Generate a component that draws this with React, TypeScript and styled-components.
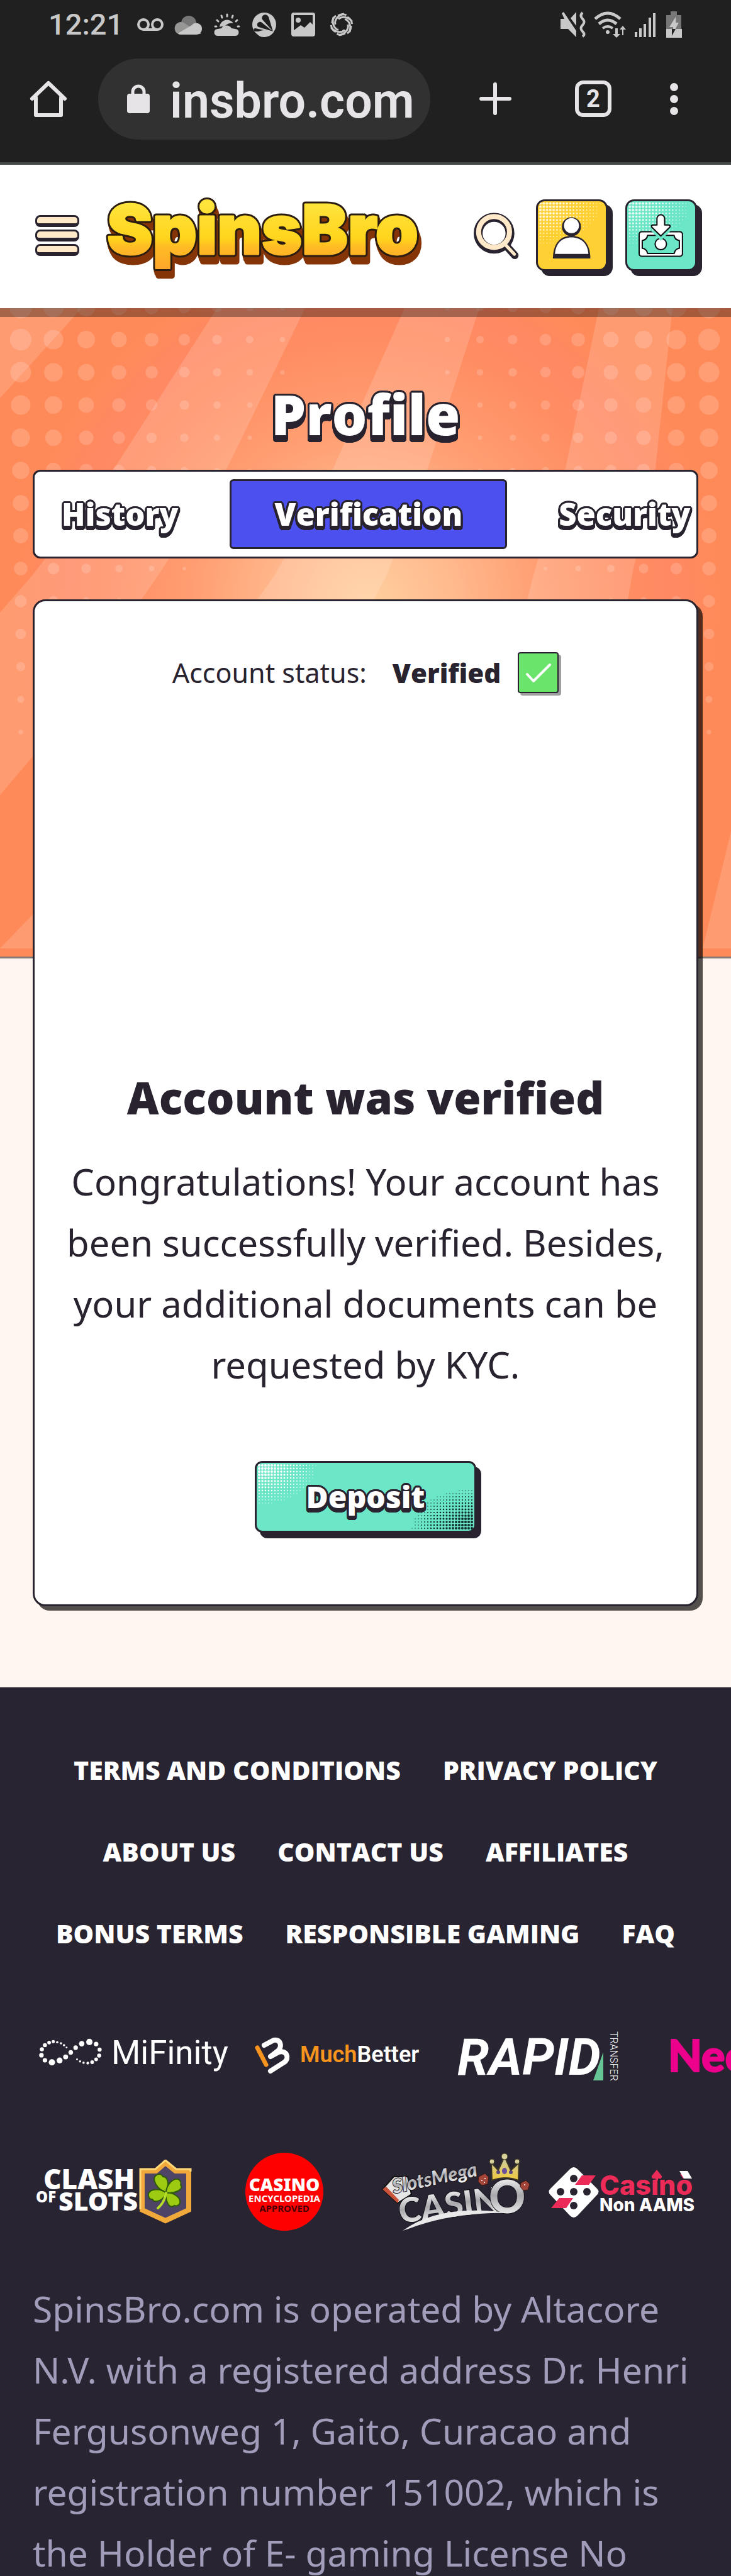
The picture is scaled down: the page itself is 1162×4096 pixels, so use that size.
import React from 'react';
import styled, { createGlobalStyle, css } from 'styled-components';

const INK = '#28232f';
const SANS = '"Noto Sans", "Open Sans", sans-serif';
const HEAVY = '"Open Sans", "Noto Sans", sans-serif';
const UI = 'Roboto, "Liberation Sans", sans-serif';

/* Comic outline: a ring of hard shadows plus an extruded lower edge. */
const outline = (ring: number, drop: number) => {
  const parts: string[] = [];
  for (let d = 0; d <= drop; d += 2) {
    for (let a = 0; a < 16; a += 1) {
      const x = Math.round(Math.cos((a * Math.PI) / 8) * ring);
      const y = Math.round(Math.sin((a * Math.PI) / 8) * ring) + d;
      parts.push(`${x}px ${y}px 0 ${INK}`);
    }
  }
  return parts.join(',');
};

const GlobalStyle = createGlobalStyle`
  *, *::before, *::after { box-sizing: border-box; }
  body { margin: 0; font-family: ${SANS}; color: ${INK}; }
  button, input { font: inherit; color: inherit; margin: 0; }
  h1, h2, p { margin: 0; }
  svg { display: block; flex: none; overflow: visible; }
`;

const Screen = styled.div`
  height: 100vh;
  overflow: hidden;
  display: flex;
  flex-direction: column;
  background: #fff6ef;
  > * { flex: none; }
`;

/* ---------- phone and browser chrome ---------- */

const Chrome = styled.div`
  background: #202020;
  border-bottom: 4px solid #434947;
  font-family: ${UI};
`;

const StatusBar = styled.div`
  height: 78px;
  display: flex;
  align-items: center;
  justify-content: space-between;
  padding: 0 75px 0 77px;
  color: #c8c8c8;
`;

const StatusGroup = styled.div<{ gap: number }>`
  display: flex;
  align-items: center;
  gap: ${(p) => p.gap}px;
`;

const Clock = styled.time`
  font-size: 47px;
  font-weight: 500;
  line-height: 52px;
`;

const Toolbar = styled.div`
  height: 180px;
  display: flex;
  align-items: center;
  padding: 0 84px 22px 48px;
  color: #e6e4e6;
`;

const BareButton = styled.button`
  border: 0;
  padding: 0;
  background: none;
  display: block;
  flex: none;
`;

const AddressPill = styled.label`
  flex: 1 1 0;
  min-width: 0;
  height: 129px;
  margin: 0 78px 0 50px;
  padding: 0 12px 0 46px;
  border-radius: 65px;
  background: #313131;
  display: flex;
  align-items: center;
  gap: 32px;
`;

const Address = styled.input`
  flex: 1 1 0;
  min-width: 0;
  width: 0;
  height: 112px;
  border: 0;
  padding: 8px 0 0;
  background: none;
  outline: 0;
  font-size: 77px;
  font-weight: 600;
  line-height: 100px;
`;

const TabsButton = styled(BareButton)`
  width: 58px;
  height: 58px;
  margin-left: 101px;
  border: 6px solid #e6e4e6;
  border-radius: 13px;
  font-size: 38px;
  font-weight: 700;
  line-height: 46px;
  text-align: center;
`;

const MenuDots = styled(BareButton)`
  margin-left: 93px;
  display: grid;
  gap: 6px;
`;

const Dot = styled.span`
  width: 13px;
  height: 13px;
  border-radius: 50%;
  background: #e6e4e6;
`;

/* ---------- site header ---------- */

const Header = styled.header`
  position: relative;
  z-index: 1;
  height: 228px;
  padding: 0 54px 4px 56px;
  display: flex;
  align-items: center;
  background: #fff;
  box-shadow: 0 14px 0 rgba(0, 0, 0, 0.35);
`;

const Burger = styled(BareButton)`
  display: grid;
  gap: 4px;
`;

const BurgerBar = styled.span`
  width: 70px;
  height: 19px;
  border: 3px solid ${INK};
  border-bottom-width: 6px;
  border-radius: 8px;
  background: #ffe9c9;
`;

const LogoLink = styled.a`
  display: block;
  margin: 0 auto 0 43px;
`;

const HeaderActions = styled.div`
  display: flex;
  align-items: center;
  gap: 28px;
`;

const TileButton = styled.button<{ tone: string }>`
  width: 114px;
  height: 114px;
  padding: 0;
  border: 3px solid ${INK};
  border-radius: 14px;
  overflow: hidden;
  background: ${(p) => p.tone};
  box-shadow: 8px 8px 0 ${INK};
`;

/* ---------- profile page ---------- */

const Main = styled.main`
  display: grid;
`;

const Backdrop = styled.div`
  grid-area: 1 / 1;
  align-self: start;
  height: 1034px;
  border-bottom: 3px solid #85786e;
  background: #ff8a59;
  overflow: hidden;
  svg { width: 100%; height: 1018px; overflow: hidden; }
`;

const Content = styled.div`
  grid-area: 1 / 1;
  min-width: 0;
  padding: 120px 52px 129px;
`;

const Title = styled.h1`
  font-family: ${HEAVY};
  font-size: 88px;
  font-weight: 800;
  line-height: 97px;
  text-align: center;
  color: #fff;
  text-shadow: ${outline(3, 8)};
`;

const TabStrip = styled.div`
  height: 141px;
  margin-top: 40px;
  padding: 12px 0;
  border: 3px solid ${INK};
  border-radius: 12px;
  background: #fff;
  overflow: hidden;
  display: flex;
  gap: 11px;
`;

const Tab = styled.button<{ active?: boolean; scrolled?: boolean }>`
  flex: none;
  padding: 0 68px 2px;
  border: 3px solid transparent;
  border-radius: 6px;
  background: none;
  font-family: ${HEAVY};
  font-size: 49px;
  font-weight: 800;
  line-height: 60px;
  color: #fff;
  text-shadow: ${outline(3, 4)};
  ${(p) => p.active && css`background: #4b50ef; border-color: ${INK};`}
  ${(p) => p.scrolled && css`margin-left: -28px;`}
`;

const Card = styled.section`
  margin-top: 65px;
  padding: 81px 44px 114px;
  border: 3px solid ${INK};
  border-radius: 20px;
  background: #fff;
  box-shadow: 7px 7px 0 rgba(0, 0, 0, 0.68);
  display: flex;
  flex-direction: column;
  align-items: center;
`;

const StatusRow = styled.div`
  display: flex;
  align-items: center;
  font-size: 43px;
  line-height: 65px;
`;

const StatusValue = styled.strong`
  margin: 0 27px 0 41px;
  font-family: ${HEAVY};
  font-size: 42px;
  font-weight: 800;
`;

const CheckBadge = styled.span`
  width: 65px;
  height: 65px;
  border: 2px solid ${INK};
  border-radius: 4px;
  background: #6be46b;
  box-shadow: 4px 4px 0 rgba(0, 0, 0, 0.38);
  display: grid;
  place-items: center;
`;

const Illustration = styled.div`
  height: 595px;
`;

const CardTitle = styled.h2`
  font-family: ${HEAVY};
  font-size: 70px;
  font-weight: 800;
  line-height: 97px;
`;

const CardText = styled.p`
  margin-top: 36px;
  font-size: 58px;
  line-height: 97px;
  text-align: center;
`;

const DepositButton = styled.button`
  position: relative;
  width: 352px;
  height: 114px;
  margin-top: 105px;
  padding: 0;
  border: 3px solid ${INK};
  border-radius: 12px;
  background: #6be6c6;
  box-shadow: 8px 9px 0 ${INK};
  font-family: ${HEAVY};
  font-size: 48px;
  font-weight: 800;
  line-height: 60px;
  color: #fff;
  text-shadow: ${outline(3, 4)};
  > svg { position: absolute; inset: 0; width: 100%; height: 100%; }
  > span { position: relative; }
`;

/* ---------- footer ---------- */

const Footer = styled.footer`
  padding-top: 99px;
  background: #292431;
  color: #fff;
`;

const FooterNav = styled.nav`
  padding: 0 52px;
  display: flex;
  flex-wrap: wrap;
  justify-content: center;
  gap: 65px 67px;
`;

const FooterLink = styled.a`
  font-family: ${HEAVY};
  font-size: 41px;
  font-weight: 800;
  line-height: 65px;
  color: #fff;
  text-decoration: none;
  white-space: nowrap;
`;

const LogoRow = styled.div<{ top: number }>`
  margin-top: ${(p) => p.top}px;
  padding-left: 53px;
  display: flex;
  overflow: hidden;
`;

const Legal = styled.p`
  margin-top: 76px;
  padding: 0 52px;
  font-size: 57px;
  line-height: 97px;
  color: #a09cba;
`;

/* ---------- drawings ---------- */

type DotProps = { cols: number; rows: number; pitch: number; max: number; x: number; y: number; dir: 1 | -1; fill: string };

const HalftoneDots = ({ cols, rows, pitch, max, x, y, dir, fill }: DotProps) => (
  <g fill={fill}>
    {Array.from({ length: cols * rows }, (_, i) => {
      const c = i % cols;
      const r = Math.floor(i / cols);
      const t = 1 - Math.hypot(c / cols, r / rows);
      return t > 0.05 ? (
        <circle key={i} cx={x + dir * c * pitch} cy={y + dir * r * pitch} r={max * Math.min(1, 0.25 + t)} />
      ) : null;
    })}
  </g>
);

const StatusIconsLeft = () => (
  <svg width="348" height="44" viewBox="0 0 348 44" fill="none">
    <g stroke="#c8c8c8" strokeWidth="4">
      <circle cx="10" cy="22" r="8" /><circle cx="32" cy="22" r="8" /><path d="M10 30H32" />
    </g>
    <circle cx="82" cy="20" r="12" fill="#777" />
    <path d="M70 38a10 10 0 1 1 4-19l28 18z" fill="#969794" />
    <path d="M65 36l22-13a9 9 0 0 1 16 6c0 5-4 9-9 9H71c-3 0-5-1-6-2z" fill="#c8c8c8" />
    <g fill="#c8c8c8" transform="translate(-4 0)">
      <path d="M135 26a12 12 0 0 1 22-6c-9-2-13 5-16 5-3 0-4 0-6 1z" />
      <path d="M132 40a5 5 0 0 1 0-11l6-1c3-6 13-6 16 0l6 1a5 5 0 0 1 0 11z" />
      <path d="M147 6v3M138 8l1 3M131 15l2 2M128 25h2M156 8l-1 3M163 15l-2 2M166 25h-2" stroke="#c8c8c8" strokeWidth="3" strokeLinecap="round" />
    </g>
    <circle cx="202" cy="22" r="19" fill="#c8c8c8" />
    <g fill="#202020" transform="translate(-6 0)">
      <path d="M222 33l-17-19c-3-5 5-12 10-4z" />
      <path d="M222 33l-23-7c-5-3-1-10 4-8z" />
      <path d="M222 34l-28-1c-3 0-4-5 0-5z" />
    </g>
    <path d="M190 35c8-6 18-4 27-1-4 6-10 8-16 8s-9-3-11-7z" fill="#c8c8c8" />
    <g transform="translate(-6 0)">
      <rect x="253" y="5" width="34" height="34" rx="2" stroke="#c8c8c8" strokeWidth="4" />
      <circle cx="262" cy="15" r="4" fill="#c8c8c8" />
      <path d="M254 32l12-9 6 4 9-9 7 7v13h-34z" fill="#c8c8c8" />
    </g>
    <g stroke="#c8c8c8" transform="translate(325 22)">
      {[0, 60, 120, 180, 240, 300].map((a) => (
        <path key={a} transform={`rotate(${a})`} d="M-10 0C-12 -8 -5 -15 4 -17M-15 -2C-15 -8 -12 -12 -9 -14" strokeWidth="3" />
      ))}
    </g>
  </svg>
);

const StatusIconsRight = () => (
  <svg width="196" height="42" viewBox="0 0 196 42" fill="#c8c8c8">
    <path d="M0 12h6L2 3l3-2 20 30v10L12 28H0zM16 11l9-10v22z" />
    <path d="M35 2q-5 5 0 10t0 10 0 10 0 8" fill="none" stroke="#c8c8c8" strokeWidth="4" />
    <g fill="none" stroke="#c8c8c8" strokeWidth="5">
      <path d="M55 12q20-18 40 0" /><path d="M61 20q14-12 28 0" /><path d="M67 27q8-6 16 0" strokeWidth="4" />
    </g>
    <circle cx="75" cy="33" r="3" />
    <path d="M87 27v9h-4l6 6 6-6h-4v-9zM98 38v-9h-4l5-6 5 6h-4v9z" />
    <path d="M118 33h4v8h-4zM125 27h4v14h-4zM132 20h4v21h-4zM140 10h4v31h-4zM147 3h4v38h-4z" />
    <path d="M175 0h10v6h7v22h-24V6h7z" fill="#777" />
    <rect x="168" y="28" width="25" height="14" />
    <path d="M183 9l-10 16h6v4h3l6-11h-5z" />
    <path d="M177 28h6l-6 11z" fill="#202020" />
  </svg>
);

const HomeIcon = () => (
  <svg width="58" height="58" viewBox="0 0 58 58" fill="none" stroke="#e6e4e6" strokeWidth="6" strokeLinejoin="round" strokeLinecap="round">
    <path d="M3 29L29 4l26 25M9 27v28h40V27" />
  </svg>
);

const LockIcon = () => (
  <svg width="36" height="46" viewBox="0 0 36 46">
    <rect y="15" width="36" height="31" rx="4" fill="#e6e4e6" />
    <path d="M9 16v-4a9 9 0 0 1 18 0v4" fill="none" stroke="#e6e4e6" strokeWidth="5" />
  </svg>
);

const PlusIcon = () => (
  <svg width="51" height="52" viewBox="0 0 51 52" stroke="#e6e4e6" strokeWidth="6" strokeLinecap="round">
    <path d="M25 3v46M3 26h45" />
  </svg>
);

const SpinsBroLogo = () => (
  <svg width="502" height="112" viewBox="0 0 502 112" role="img" aria-label="SpinsBro">
    <defs>
      <linearGradient id="gold" x1="0" y1="0" x2="0" y2="1">
        <stop offset="0.2" stopColor="#ffe43c" />
        <stop offset="0.62" stopColor="#ffd41c" />
        <stop offset="0.72" stopColor="#ffbb24" />
        <stop offset="1" stopColor="#ffa52c" />
      </linearGradient>
      <text id="wordmark" x="1" y="86" fontFamily="Inter, sans-serif" fontWeight="900" fontSize="109">SpinsBro</text>
    </defs>
    <g fill="#843406" stroke="#843406" strokeWidth="9" strokeLinejoin="round">
      <use href="#wordmark" x="1" y="4" /><use href="#wordmark" x="2" y="8" /><use href="#wordmark" x="4" y="12" />
    </g>
    <use href="#wordmark" stroke="#2a1c10" strokeWidth="9" strokeLinejoin="round" fill="#2a1c10" />
    <use href="#wordmark" fill="url(#gold)" stroke="url(#gold)" strokeWidth="3" strokeLinejoin="round" />
  </svg>
);

const SearchIcon = () => (
  <svg width="71" height="75" viewBox="0 0 237 250" fill="none">
    <g stroke={INK} strokeWidth="58" strokeLinecap="round">
      <circle cx="108" cy="113" r="79" /><path d="M182 190l36 40" strokeWidth="40" />
    </g>
    <g stroke="#ffe9c9" strokeLinecap="round">
      <circle cx="108" cy="106" r="82" strokeWidth="27" /><path d="M172 178l44 46" strokeWidth="17" />
    </g>
    <circle cx="108" cy="113" r="61" fill="#fff" />
  </svg>
);

const UserIcon = () => (
  <svg width="108" height="108" viewBox="10 10 370 370">
    <HalftoneDots cols={19} rows={13} pitch={18} max={7} x={24} y={22} dir={1} fill="#fff6cf" />
    <circle cx="193" cy="149" r="52" fill={INK} />
    <path d="M92 322c0-86 44-124 101-124s103 38 103 124z" fill={INK} />
    <circle cx="193" cy="143" r="41" fill="#fff" />
    <path d="M103 297c4-60 40-90 90-90s88 30 92 90z" fill="#fff" />
  </svg>
);

const CashIcon = () => (
  <svg width="108" height="108" viewBox="10 10 370 370">
    <HalftoneDots cols={19} rows={13} pitch={18} max={7} x={24} y={22} dir={1} fill="#dffaf2" />
    <g stroke="#0c0c10" strokeWidth="7" strokeLinejoin="round">
      <rect x="75" y="176" width="236" height="134" rx="14" fill="#fff" />
      <path d="M121 196H265q4 24 29 28v42q-24 4-28 28H121q-4-24-29-28v-42q25-4 29-28z" fill="#6be6c6" />
      <circle cx="193" cy="243" r="31" fill="#fff" />
      <path d="M140 172l53 52 53-52z" fill="#6be6c6" stroke="none" />
      <path d="M172 105a21 21 0 0 1 42 0v34h22q12 2 6 12l-49 48-49-48q-6-10 6-12h22z" fill="#fff" />
    </g>
  </svg>
);

const DepositHalftone = () => (
  <svg viewBox="0 0 346 108" preserveAspectRatio="none" aria-hidden="true">
    <HalftoneDots cols={19} rows={13} pitch={5} max={2} x={4} y={4} dir={1} fill="#fff" />
    <HalftoneDots cols={20} rows={13} pitch={5} max={2} x={342} y={104} dir={-1} fill="#102e2b" />
  </svg>
);

const HeroArt = () => (
  <svg viewBox="0 0 1162 1018" preserveAspectRatio="xMidYMin slice" aria-hidden="true">
    <defs>
      <radialGradient id="glow" gradientUnits="userSpaceOnUse" cx="585" cy="470" r="560">
        <stop offset="0" stopColor="#ffcf9f" />
        <stop offset="0.25" stopColor="#ffb98d" />
        <stop offset="0.5" stopColor="#ff9e72" />
        <stop offset="0.75" stopColor="#ff8d62" />
        <stop offset="0.86" stopColor="#ff8963" />
        <stop offset="1" stopColor="#ff8a59" />
      </radialGradient>
    </defs>
    <rect width="1162" height="1018" fill="url(#glow)" />
    <g fill="#fff" fillOpacity="0.15">
      <path d="M0 0H130L0 143z" />
      <path d="M345 0H485L361 254L252 424L52 713L0 774V484L52 424L182 254z" />
      <path d="M643 0H762L680 254L615 424L300 1018H0L52 964L437 424L530 254z" />
      <path d="M952 0H1069L1042 254L1005 424L900 1018H700L848 424L899 254z" />
      <path d="M1162 832V1018H1117z" />
    </g>
    <g fill="#fff" fillOpacity="0.17">
      {Array.from({ length: 14 * 9 }, (_, i) => {
        const row = Math.floor(i / 9);
        const col = i % 9;
        const r = 18 * Math.pow(1 - row / 14, 0.6) - 1.6 * col;
        if (r < 2) return null;
        const y = row * 52 - 2;
        return (
          <React.Fragment key={i}>
            <circle cx={33 + col * 52} cy={y} r={r} />
            <circle cx={1127 - col * 52} cy={y} r={r} />
          </React.Fragment>
        );
      })}
    </g>
  </svg>
);

const INFINITY: [number, number, number][] = [
  [286, 212, 4], [275, 200, 5], [262, 190, 5], [246, 184, 5], [229, 181, 7], [211, 186, 8], [193, 200, 9], [180, 222, 9],
  [178, 253, 10], [193, 280, 10], [223, 291, 14], [256, 281, 13], [282, 262, 11], [304, 238, 10], [325, 213, 10],
  [351, 192, 12], [384, 183, 14], [413, 194, 10], [428, 223, 9], [426, 255, 9], [413, 275, 8], [396, 290, 8],
  [377, 295, 6], [359, 293, 5], [344, 286, 5], [331, 275, 4],
];

const MiFinity = () => (
  <svg width="331" height="90" viewBox="0 0 331 90" fill="#fff">
    {INFINITY.map(([x, y, r]) => (
      <circle key={`${x}-${y}`} cx={x * 0.37 - 53} cy={y * 0.3 - 31} r={r * 0.36} />
    ))}
    <text x="124" y="59" fontFamily={UI} fontSize="53" fontWeight="400">MiFinity</text>
  </svg>
);

const MuchBetter = () => (
  <svg width="313" height="90" viewBox="0 0 313 90">
    <path d="M25 33l14 27" stroke="#f7941e" strokeWidth="7" strokeLinecap="round" />
    <path d="M36 29l15-8c10-2 14 8 8 16L46 47l13-7c12-4 18 9 9 16L46 70" fill="none" stroke="#fff" strokeWidth="8" strokeLinecap="round" strokeLinejoin="round" />
    <text x="93" y="56" fontFamily={UI} fontSize="36" fontWeight="600" fill="#fff"><tspan fill="#f7941e">Much</tspan>Better</text>
  </svg>
);

const RapidTransfer = () => (
  <svg width="332" height="90" viewBox="0 0 332 90" fill="#fff">
    <text x="30" y="76" fontFamily={UI} fontSize="81" fontWeight="700" fontStyle="italic">RAPID</text>
    <path d="M262 85V40L246 85z" fill="#66c594" />
    <text transform="translate(273 7) rotate(90)" fontFamily={UI} fontSize="16" fontWeight="300">TRANSFER</text>
  </svg>
);

const Neosurf = () => (
  <svg width="300" height="90" viewBox="0 0 300 90">
    <text x="33" y="71" fontFamily="Lato, sans-serif" fontSize="70" fontWeight="900" fill="#ec008c" stroke="#ec008c" strokeWidth="2">Neosurf</text>
  </svg>
);

const ClashOfSlots = () => (
  <svg width="293" height="124" viewBox="0 0 293 124">
    <g fontFamily={SANS} fontWeight="900" fill="#fff">
      <text x="16" y="58" fontSize="44">CLASH</text>
      <text x="4" y="79" fontSize="24">OF</text>
      <text x="40" y="92" fontSize="41">SLOTS</text>
    </g>
    <path d="M210 16l16 13h21v62l-37 17-37-17V29h22z" fill="#4e4466" stroke="#f2a93b" strokeWidth="8" />
    <path d="M210 12l17 14h23v4" fill="none" stroke="#ffd978" strokeWidth="3" />
    <path d="M170 90V26h24l16-14" fill="none" stroke="#ffd978" strokeWidth="3" />
    <g fill="#9ccb12" stroke="#2f5a08" strokeWidth="2">
      <path d="M211 64c-14-6-24-22-16-28 5-4 10-1 11 2 9 0 10 14 5 26z" />
      <path d="M211 64c0-14 12-24 19-22 5 2 5 7 4 9 6 7-8 14-23 13z" />
      <path d="M211 64c-8-8-25-7-28 1-1 7 3 9 6 9 4 7 18 2 22-10z" />
      <path d="M211 64c12-2 24 8 22 16-2 5-7 5-9 4-8 6-14-6-13-20z" />
    </g>
    <path d="M211 64q-3 16-13 24" fill="none" stroke="#b6dc2a" strokeWidth="4" strokeLinecap="round" />
  </svg>
);

const CasinoEncyclopedia = () => (
  <svg width="220" height="124" viewBox="0 0 220 124">
    <circle cx="106" cy="62" r="62" fill="#fe0000" />
    <g fontFamily={SANS} textAnchor="middle" fill="#fff">
      <text x="106" y="61" fontSize="28" fontWeight="900">CASINO</text>
      <text x="106" y="78" fontSize="15" fontWeight="700">ENCYCLOPEDIA</text>
      <text x="106" y="94" fontSize="15" fontWeight="700" fill="#4a0006">APPROVED</text>
    </g>
  </svg>
);

const SlotsMegaCasino = () => (
  <svg width="290" height="124" viewBox="0 0 290 124">
    <defs>
      <linearGradient id="silver" x1="0" y1="0" x2="0" y2="1">
        <stop offset="0.1" stopColor="#fff" />
        <stop offset="0.5" stopColor="#a9a9ad" />
        <stop offset="0.9" stopColor="#f4f4f4" />
      </linearGradient>
      <linearGradient id="crown" x1="0" y1="0" x2="0" y2="1">
        <stop offset="0" stopColor="#c9c9a8" />
        <stop offset="1" stopColor="#f2cb3c" />
      </linearGradient>
    </defs>
    <path d="M60 38l-18 20 24 22 22-14-6-28z" fill="#e6e6e6" stroke="#111" strokeWidth="2" />
    <path d="M42 58l24 22 2-5-20-21z" fill="#c9543a" />
    <g fontFamily="Lato, sans-serif" fontWeight="900" stroke="#131018" strokeWidth="2" paintOrder="stroke">
      <text transform="translate(60 65) rotate(-12)" fontSize="31" fontStyle="italic" fill="url(#silver)">SlotsMega</text>
      <text transform="translate(70 112) rotate(-7)" fontSize="54" fill="url(#silver)">CASIN</text>
      <text x="211" y="96" fontSize="72" fill="url(#silver)">O</text>
    </g>
    <path d="M74 124q60-44 172-28-92-2-160 24z" fill="#e9e9ea" />
    <path d="M216 44l-1-28 11 12 10-22 10 22 13-12-1 28q-20-8-42 0z" fill="url(#crown)" stroke="#3a3525" strokeWidth="2" />
    <g fill="#d8d29a" stroke="#3a3525">
      <circle cx="216" cy="14" r="4" /><circle cx="236" cy="6" r="5" /><circle cx="256" cy="14" r="4" />
    </g>
    <ellipse cx="236" cy="29" rx="4" ry="5" fill="#6a4f9a" />
    <circle cx="226" cy="31" r="3" fill="#55437c" /><circle cx="246" cy="31" r="3" fill="#55437c" />
    <g fill="#a5453a" stroke="#3b1512">
      <path d="M195 38l10-5 6 6-2 11-9 2-6-6z" /><path d="M262 48l8-4 6 6-3 9-7 1-5-6z" />
    </g>
    <g fill="#fff"><circle cx="200" cy="44" r="1" /><circle cx="205" cy="41" r="1" /><circle cx="204" cy="47" r="1" /><circle cx="268" cy="51" r="1" /></g>
  </svg>
);

const CasinoNonAams = () => (
  <svg width="253" height="124" viewBox="0 0 253 124">
    <path d="M50 26q6-6 12 0l31 31q5 5 0 10l-31 33q-6 6-12 0L19 67q-5-5 0-10z" fill="#fff" />
    <path d="M69 36h22L80 51H58zM33 72h22L44 88H20z" fill="#ec2b58" />
    <g fill={INK}>
      <circle cx="56" cy="41" r="6" /><circle cx="35" cy="62" r="6" /><circle cx="56" cy="62" r="6" /><circle cx="77" cy="62" r="6" /><circle cx="56" cy="84" r="6" />
    </g>
    <g fontFamily="Inter, sans-serif" fontWeight="800">
      <text x="97" y="67" fontSize="43" fill="#ec2b58">Casinò</text>
      <text x="97" y="93" fontSize="28" fill="#fff">Non AAMS</text>
    </g>
    <path d="M224 29h13l7 12h-13z" fill="#fff" />
    <path d="M188 27l8 10q1 5-6 4v3h-4v-3q-7 1-6-4z" fill="#ec2b58" />
  </svg>
);

const CheckMark = () => (
  <svg width="42" height="34" viewBox="0 0 42 34" fill="none" stroke="#fff" strokeWidth="4" strokeLinecap="round" strokeLinejoin="round">
    <path d="M3 19l10 11L39 4" />
  </svg>
);

/* ---------- page ---------- */

const LINKS = ['TERMS AND CONDITIONS', 'PRIVACY POLICY', 'ABOUT US', 'CONTACT US', 'AFFILIATES', 'BONUS TERMS', 'RESPONSIBLE GAMING', 'FAQ'];

export default function App() {
  return (
    <Screen>
      <GlobalStyle />
      <Chrome>
        <StatusBar>
          <StatusGroup gap={22}>
            <Clock>12:21</Clock>
            <StatusIconsLeft />
          </StatusGroup>
          <StatusIconsRight />
        </StatusBar>
        <Toolbar>
          <BareButton aria-label="Home"><HomeIcon /></BareButton>
          <AddressPill>
            <LockIcon />
            <Address aria-label="Address" defaultValue="insbro.com" />
          </AddressPill>
          <BareButton aria-label="New tab"><PlusIcon /></BareButton>
          <TabsButton aria-label="Open tabs">2</TabsButton>
          <MenuDots aria-label="More"><Dot /><Dot /><Dot /></MenuDots>
        </Toolbar>
      </Chrome>

      <Header>
        <Burger aria-label="Menu"><BurgerBar /><BurgerBar /><BurgerBar /></Burger>
        <LogoLink href="#home"><SpinsBroLogo /></LogoLink>
        <HeaderActions>
          <BareButton aria-label="Search"><SearchIcon /></BareButton>
          <TileButton tone="#fed033" aria-label="Profile"><UserIcon /></TileButton>
          <TileButton tone="#6be6c6" aria-label="Cashier"><CashIcon /></TileButton>
        </HeaderActions>
      </Header>

      <Main>
        <Backdrop><HeroArt /></Backdrop>
        <Content>
          <Title>Profile</Title>
          <TabStrip role="tablist">
            <Tab role="tab" scrolled>History</Tab>
            <Tab role="tab" active aria-selected="true">Verification</Tab>
            <Tab role="tab">Security</Tab>
          </TabStrip>
          <Card>
            <StatusRow>
              <span>Account status:</span>
              <StatusValue>Verified</StatusValue>
              <CheckBadge><CheckMark /></CheckBadge>
            </StatusRow>
            <Illustration />
            <CardTitle>Account was verified</CardTitle>
            <CardText>
              Congratulations! Your account has been successfully verified. Besides, your additional documents can be requested by KYC.
            </CardText>
            <DepositButton>
              <DepositHalftone />
              <span>Deposit</span>
            </DepositButton>
          </Card>
        </Content>
      </Main>

      <Footer>
        <FooterNav>
          {LINKS.map((label) => (
            <FooterLink key={label} href="#info">{label}</FooterLink>
          ))}
        </FooterNav>
        <LogoRow top={116}>
          <MiFinity /><MuchBetter /><RapidTransfer /><Neosurf />
        </LogoRow>
        <LogoRow top={110}>
          <ClashOfSlots /><CasinoEncyclopedia /><SlotsMegaCasino /><CasinoNonAams />
        </LogoRow>
        <Legal>
          SpinsBro.com is operated by Altacore N.V. with a registered address Dr. Henri Fergusonweg 1, Gaito, Curacao and
          registration number 151002, which is the Holder of E- gaming License No
        </Legal>
      </Footer>
    </Screen>
  );
}
